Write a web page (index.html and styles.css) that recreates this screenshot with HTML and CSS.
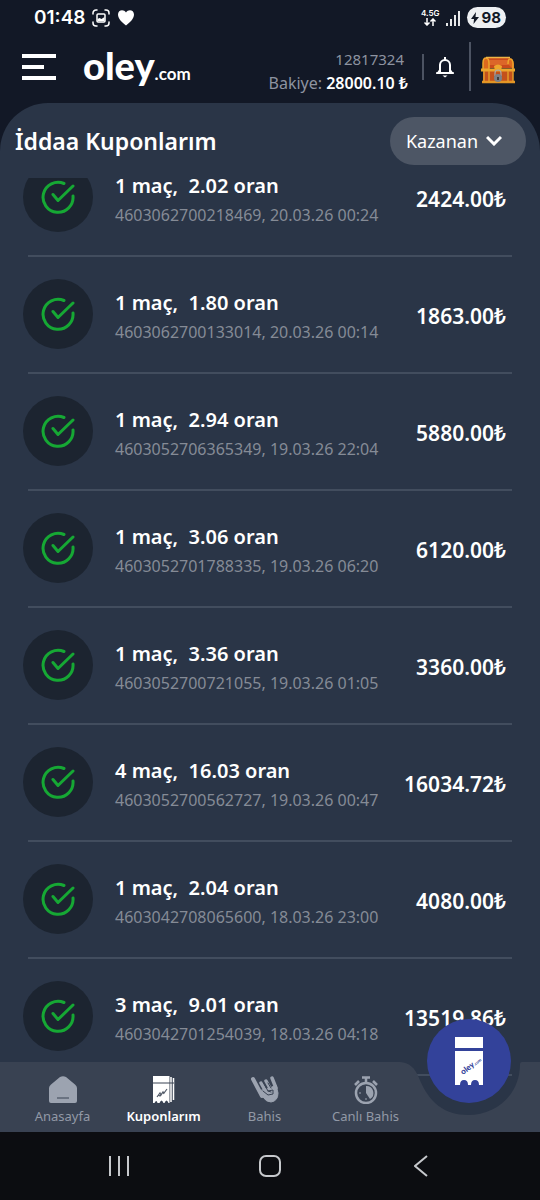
FILE: index.html
```html
<!DOCTYPE html>
<html lang="tr">
<head>
<meta charset="utf-8">
<meta name="viewport" content="width=device-width, initial-scale=1">
<title>İddaa Kuponlarım</title>
<link rel="stylesheet" href="styles.css">
</head>
<body>
<div class="app">
  <div class="status">
    <time class="clock">01:48</time>
    <svg class="shot" viewBox="0 0 18 18" width="18" height="18" fill="none" stroke="#fff" stroke-width="1.5" stroke-linecap="round"><path d="M1 5V4a3 3 0 0 1 3-3h1M13 1h1a3 3 0 0 1 3 3v1M17 13v1a3 3 0 0 1-3 3h-1M5 17H4a3 3 0 0 1-3-3v-1"/><rect x="5" y="5" width="8" height="8" rx="1"/><path d="M5.500 12v-2l2-1 2 1 3-2v4z" fill="#fff" stroke="none"/></svg>
    <svg viewBox="0 0 18 17" width="18" height="17" fill="#fff"><path d="M9 16.500C5 13.500 1 9.500 1 5.500 1 0.500 7 0 9 3.500 11 0 17 0.500 17 5.500c0 4-4 8-8 11z"/></svg>
    <div class="net"><span>4.5G</span><svg viewBox="0 0 12 8" width="12" height="8" fill="none" stroke="#fff" stroke-width="1.500"><path d="M3 0v7M0.500 4.500 3 7l2.500-2.500M9 8V1M6.500 3.500 9 1l2.500 2.500"/></svg></div>
    <svg viewBox="0 0 14 16" width="14" height="16" stroke="#fff" stroke-width="1.800"><path d="M1 13v3M5 9v7M9 5v11M13 1v15"/></svg>
    <div class="battery"><svg viewBox="0 0 8 12" width="8" height="12" fill="#121826"><path d="M5 0 0 7h3L2.500 12 8 5H4.500z"/></svg>98</div>
  </div>

  <header class="topbar">
    <button class="menu" aria-label="Menü"><svg viewBox="0 0 34 26" width="34" height="26" stroke="#fff" stroke-width="4"><path d="M0 2h34M0 13h22M0 24h34"/></svg></button>
    <a class="logo" href="#">oley<span class="logo-com">.com</span></a>
    <div class="account">
      <span class="number">12817324</span>
      <span class="balance">Bakiye: <b>28000.10 ₺</b></span>
    </div>
    <button class="bell" aria-label="Bildirimler"><svg viewBox="0 0 18 22" width="18" height="22" fill="none" stroke="#fff" stroke-width="2"><path d="M4 16V9a5 5 0 0 1 10 0v7M1 17h16" stroke-linecap="round"/><path d="M4 14l-2 3h14l-2-3"/><path d="M9 1v3"/><path d="M6.500 19.500h5L9 21.500z" fill="#fff" stroke="none"/></svg></button>
    <button class="chest" aria-label="Hazine"><svg viewBox="0 0 36 28" width="36" height="28"><path d="M3 12V7q0-5 4-5h22q4 0 5 6v4z" fill="#c94a1c"/><path d="M8 4h20l2 5H9z" fill="#dc6629"/><path d="M3 15h30v10H3z" fill="#c4511c"/><path d="M3 13V7q0-5 3-5 3 0 3 6v5M33 13V8q0-5-3-5-2 0-2 5" fill="#dd691e" stroke="#eda62c" stroke-width="1.500"/><path d="M6 1.500h24" stroke="#f0b445" stroke-width="1.500"/><path d="M1 14h34" stroke="#eda62c" stroke-width="3"/><path d="M2 26h33" stroke="#e39524" stroke-width="2.500"/><path d="M4 15v11M9 15v11M33 15v11M28 15v11" stroke="#e39a28" stroke-width="1.500"/><path d="M14 10q4-3 8 0l-1 5h-6z" fill="#eda62c"/><path d="M15 20v-3a3 3 0 0 1 6 0v3" fill="none" stroke="#aaa" stroke-width="1.200"/><circle cx="18" cy="22" r="4" fill="#7d8188"/><path d="M18 21v3" stroke="#2c2927" stroke-width="1.500"/></svg></button>
  </header>

  <main class="panel">
    <div class="panel-head">
      <h1>İddaa Kuponlarım</h1>
      <button class="filter">Kazanan<svg viewBox="0 0 16 11" width="16" height="11" fill="none" stroke="#fff" stroke-width="3"><path d="M1 2l7 7 7-7"/></svg></button>
    </div>
    <div class="scroll">
      <ul class="coupons">
        <li><span class="won"><svg viewBox="0 0 34 34"><use href="#tick"/></svg></span><div class="info"><h2>1 maç,&nbsp; 2.02 oran</h2><p>4603062700218469, 20.03.26 00:24</p></div><strong>2424.00₺</strong></li>
        <li><span class="won"><svg viewBox="0 0 34 34"><use href="#tick"/></svg></span><div class="info"><h2>1 maç,&nbsp; 1.80 oran</h2><p>4603062700133014, 20.03.26 00:14</p></div><strong>1863.00₺</strong></li>
        <li><span class="won"><svg viewBox="0 0 34 34"><use href="#tick"/></svg></span><div class="info"><h2>1 maç,&nbsp; 2.94 oran</h2><p>4603052706365349, 19.03.26 22:04</p></div><strong>5880.00₺</strong></li>
        <li><span class="won"><svg viewBox="0 0 34 34"><use href="#tick"/></svg></span><div class="info"><h2>1 maç,&nbsp; 3.06 oran</h2><p>4603052701788335, 19.03.26 06:20</p></div><strong>6120.00₺</strong></li>
        <li><span class="won"><svg viewBox="0 0 34 34"><use href="#tick"/></svg></span><div class="info"><h2>1 maç,&nbsp; 3.36 oran</h2><p>4603052700721055, 19.03.26 01:05</p></div><strong>3360.00₺</strong></li>
        <li><span class="won"><svg viewBox="0 0 34 34"><use href="#tick"/></svg></span><div class="info"><h2>4 maç,&nbsp; 16.03 oran</h2><p>4603052700562727, 19.03.26 00:47</p></div><strong>16034.72₺</strong></li>
        <li><span class="won"><svg viewBox="0 0 34 34"><use href="#tick"/></svg></span><div class="info"><h2>1 maç,&nbsp; 2.04 oran</h2><p>4603042708065600, 18.03.26 23:00</p></div><strong>4080.00₺</strong></li>
        <li><span class="won"><svg viewBox="0 0 34 34"><use href="#tick"/></svg></span><div class="info"><h2>3 maç,&nbsp; 9.01 oran</h2><p>4603042701254039, 18.03.26 04:18</p></div><strong>13519.86₺</strong></li>
      </ul>
    </div>
  </main>

  <nav class="tabs">
    <div class="tabs-bg"><span class="fill"></span><svg viewBox="0 0 140 70" width="140" height="70"><path d="M0 0C10 1 15 6 19 16 29 41 45 53 68 53c28 0 52-20 52-51q0-2 2-2h18v70H0z" fill="#394252"/></svg></div>
    <a class="tab" href="#"><svg viewBox="0 0 28 28" width="28" height="28"><path d="M0 12q0-2 2-3.500L11 1q3-1.500 6 0l9 7.500q2 1.500 2 3.500v13q0 2-2 2H2q-2 0-2-2z" fill="#9ca3b0"/><path d="M8 22h12" stroke="#394252"/></svg>Anasayfa</a>
    <a class="tab current" href="#"><svg viewBox="0 0 22 28" width="22" height="28"><path d="M0 0h16.500v27h-1q-2-5-4 0h-1q-2-5-4 0h-2q-1-4-3 0H0z" fill="#fff"/><path d="M18 1v25M20.500 2v22" stroke="#fff" stroke-width="1.500"/><path d="M0 7h21" stroke="#394252"/><path d="M4 21l3-4 1 2 2-3 1 1 3-4M5 19l2 1 3-4 1 2" fill="none" stroke="#555d6b" stroke-width="1.200"/></svg>Kuponlarım</a>
    <a class="tab" href="#"><svg viewBox="0 0 30 28" width="30" height="28" fill="none" stroke="#9ca3b0" stroke-linecap="round" stroke-linejoin="round"><path d="M3 3l9 17" stroke-width="4"/><path d="M10 15l3 6q3 5 8 5 7-1 7-9l-2-8-4 2z" fill="#9ca3b0" stroke-width="1"/><path d="M11 7l5 9M16 5l5 9M22 2l4 10" stroke-width="3.500"/><path d="M13 6l5 9 3 1M18 7l3 5M13 15l5 4 5-1v-4l-5 1" stroke="#394252" stroke-width="1"/></svg>Bahis</a>
    <a class="tab" href="#"><svg viewBox="0 0 26 28" width="26" height="28" fill="none" stroke="#9ca3b0" stroke-width="2.500"><circle cx="13" cy="17" r="10"/><path d="M9 1.500h8M13 1v6M2 9l4-4M24 9l-4-4"/><path d="M13 10v7l4 6a7 7 0 0 0-4-13z" fill="#9ca3b0" stroke="none"/><path d="M6 17h2M13 22v2" stroke-width="1"/></svg>Canlı Bahis</a>
    <button class="coupon" aria-label="Kupon"><svg viewBox="0 0 28 49" width="28" height="49"><path d="M0 0h28v11H0zM0 14h28v34h-4q0-5-4-5t-4 5h-3q0-5-4-5t-4 5H0z" fill="#fff"/><text x="8" y="38" transform="rotate(-38 8 38)" class="brand">oley<tspan class="tiny">.com</tspan></text></svg></button>
  </nav>

  <div class="system">
    <button aria-label="Son uygulamalar"><svg viewBox="0 0 20 22" width="20" height="22"><path d="M1 1v20M10 1v20M19 1v20"/></svg></button>
    <button aria-label="Ana ekran"><svg viewBox="0 0 22 22" width="22" height="22"><rect x="1" y="1" width="20" height="20" rx="6"/></svg></button>
    <button aria-label="Geri"><svg viewBox="0 0 14 22" width="14" height="22"><path d="M13 1 1 11l12 10"/></svg></button>
  </div>
</div>
<svg class="defs" width="0" height="0"><defs><g id="tick" fill="none" stroke="#16a834" stroke-width="3" stroke-linecap="round" stroke-linejoin="round"><path d="M23 3.500A15 15 0 1 0 32 16"/><path d="M12 14.500l5 6L32 6"/></g></defs></svg>
</body>
</html>
```
FILE: styles.css
```css
* { box-sizing: border-box; margin: 0; padding: 0; }
body { background: #121826; color: #fff; font-family: "Noto Sans", sans-serif; }
button { background: none; border: 0; color: inherit; font: inherit; display: flex; align-items: center; justify-content: center; }
a { color: inherit; text-decoration: none; }
svg { display: block; flex: none; }
.defs { position: absolute; }
.app { min-height: 100vh; display: flex; flex-direction: column; }

.status { height: 35px; padding: 0 34px; display: flex; align-items: center; gap: 7px; font-family: Inter, sans-serif; font-weight: 600; }
.clock { font-size: 19px; line-height: 24px; }
.net { margin-left: auto; display: flex; flex-direction: column; align-items: center; font-size: 8px; line-height: 9px; }
.battery { height: 21px; padding: 0 5px 0 4px; border-radius: 11px; background: #eef0f3; color: #121826; display: flex; align-items: center; gap: 2px; font-size: 15px; font-weight: 700; }

.topbar { height: 68px; padding: 0 24px 0 22px; display: flex; align-items: flex-start; }
.menu { margin-top: 19px; }
.logo { margin: 7px 0 0 27px; font-family: Lato, sans-serif; font-size: 38px; line-height: 46px; font-weight: 900; }
.logo-com { font-size: 17px; font-weight: 700; }
.account { margin: 12px 14px 0 auto; display: flex; flex-direction: column; align-items: flex-end; color: #8d93a0; line-height: 24px; font-size: 16px; }
.number { padding-right: 4px; font-size: 15px; }
.balance b { color: #fff; font-weight: 600; }
.bell { margin-top: 19px; height: 26px; padding: 0 15px 0 12px; border-left: 2px solid #4c5362; }
.chest { margin-top: 7px; height: 49px; padding: 6px 0 0 9px; border-left: 2px solid #4c5362; }

.panel { flex: 1; margin-bottom: -70px; background: #2a3547; border-radius: 48px 48px 0 0; display: flex; flex-direction: column; }
.panel-head { height: 75px; padding: 0 14px 0 15px; display: flex; align-items: center; justify-content: space-between; }
h1 { font-size: 23px; line-height: 32px; font-weight: 600; }
.filter { height: 48px; width: 136px; padding-right: 8px; gap: 8px; border-radius: 24px; background: #4d5665; font-size: 18px; }
.scroll { flex: 1; overflow: hidden; }
.coupons { list-style: none; margin: -38px 28px 0; }
.coupons li { height: 117px; padding-top: 2px; border-bottom: 2px solid #424d5e; display: flex; align-items: center; }
.won { width: 70px; height: 70px; margin: 0 22px 4px -5px; border-radius: 50%; background: #1c2430; display: grid; place-items: center; }
.won svg { width: 34px; height: 34px; }
.info { flex: 1; padding-top: 2px; }
h2 { font-size: 20px; line-height: 30px; font-weight: 600; }
.info p { font-size: 16px; line-height: 28px; color: #858b96; }
.coupons strong { font-size: 21px; font-weight: 600; padding-right: 6px; }

.tabs { position: relative; height: 70px; padding: 14px 124px 0 12px; display: grid; grid-template-columns: repeat(4, 1fr); }
.tabs-bg { position: absolute; inset: 0; display: flex; }
.fill { flex: 1; background: #394252; }
.tab { position: relative; display: flex; flex-direction: column; align-items: center; gap: 1px; font-size: 13px; line-height: 22px; color: #9299a6; white-space: nowrap; }
.current { color: #fff; font-weight: 600; }
.coupon { position: absolute; right: 29px; top: -43px; width: 84px; height: 84px; border-radius: 50%; background: #33429a; }
.brand { font: 900 8px Lato, sans-serif; fill: #33429a; }
.tiny { font-size: 4px; }

.system { height: 68px; padding: 0 44px; background: #0c0d11; display: grid; grid-template-columns: repeat(3, 1fr); }
.system svg { fill: none; stroke: #c6c8cc; stroke-width: 2; }
```
